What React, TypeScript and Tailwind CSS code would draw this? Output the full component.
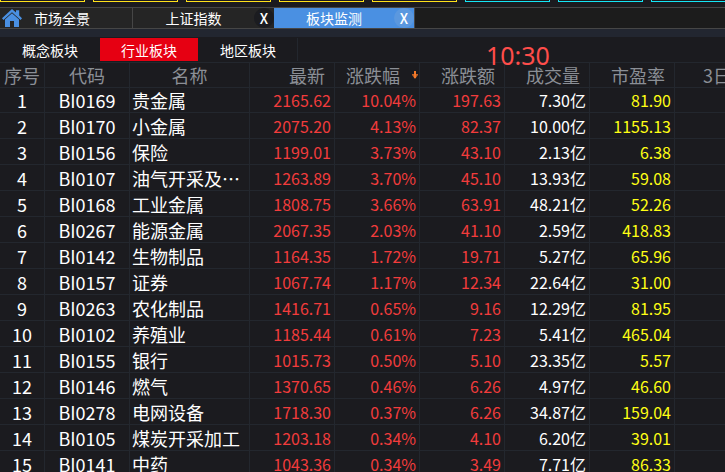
type Row = {
  code: string;
  name: string;
  last: string;
  pct: string;
  change: string;
  volume: string;
  pe: string;
};

const ROWS: Row[] = [
  { code: "BI0169", name: "贵金属", last: "2165.62", pct: "10.04%", change: "197.63", volume: "7.30亿", pe: "81.90" },
  { code: "BI0170", name: "小金属", last: "2075.20", pct: "4.13%", change: "82.37", volume: "10.00亿", pe: "1155.13" },
  { code: "BI0156", name: "保险", last: "1199.01", pct: "3.73%", change: "43.10", volume: "2.13亿", pe: "6.38" },
  { code: "BI0107", name: "油气开采及⋯", last: "1263.89", pct: "3.70%", change: "45.10", volume: "13.93亿", pe: "59.08" },
  { code: "BI0168", name: "工业金属", last: "1808.75", pct: "3.66%", change: "63.91", volume: "48.21亿", pe: "52.26" },
  { code: "BI0267", name: "能源金属", last: "2067.35", pct: "2.03%", change: "41.10", volume: "2.59亿", pe: "418.83" },
  { code: "BI0142", name: "生物制品", last: "1164.35", pct: "1.72%", change: "19.71", volume: "5.27亿", pe: "65.96" },
  { code: "BI0157", name: "证券", last: "1067.74", pct: "1.17%", change: "12.34", volume: "22.64亿", pe: "31.00" },
  { code: "BI0263", name: "农化制品", last: "1416.71", pct: "0.65%", change: "9.16", volume: "12.29亿", pe: "81.95" },
  { code: "BI0102", name: "养殖业", last: "1185.44", pct: "0.61%", change: "7.23", volume: "5.41亿", pe: "465.04" },
  { code: "BI0155", name: "银行", last: "1015.73", pct: "0.50%", change: "5.10", volume: "23.35亿", pe: "5.57" },
  { code: "BI0146", name: "燃气", last: "1370.65", pct: "0.46%", change: "6.26", volume: "4.97亿", pe: "46.60" },
  { code: "BI0278", name: "电网设备", last: "1718.30", pct: "0.37%", change: "6.26", volume: "34.87亿", pe: "159.04" },
  { code: "BI0105", name: "煤炭开采加工", last: "1203.18", pct: "0.34%", change: "4.10", volume: "6.20亿", pe: "39.01" },
  { code: "BI0141", name: "中药", last: "1043.36", pct: "0.34%", change: "3.49", volume: "7.71亿", pe: "86.33" },
];

const CARDS = ["yellow", "yellow", "yellow", "yellow", "yellow", "cyan", "cyan", "cyan"];

const HEAD = "border-r border-b border-[#23272e] p-0 font-normal";
const CELL = "border-r border-b border-[#23272e] p-0";
const NUM = `${CELL} pr-[3px] text-right text-base leading-5`;

function HomeIcon() {
  return (
    <svg width="20" height="18" viewBox="0 0 20 18" fill="#4a90e2" aria-hidden="true">
      <path d="M10 0 14 3.6V1.2h3.2v5.2L20 9.2l-1.4 1.7L10 3.2 1.4 10.9 0 9.2Z" />
      <path d="M10 4.2 17 10.5V18h-5v-6H8v6H3v-7.5Z" />
    </svg>
  );
}

function SortArrow() {
  return (
    <svg width="6" height="8" viewBox="0 0 6 8" fill="#f47a2a" aria-hidden="true">
      <path d="M2 0h2v7H2Z" />
      <path d="M0 3h6v1L3 8 0 4Z" opacity="0.75" />
    </svg>
  );
}

function CardStrip() {
  return (
    <div className="flex h-[7px] gap-2 overflow-hidden">
      {CARDS.map((tone, i) => (
        <div
          key={i}
          className={
            tone === "yellow"
              ? "h-[2px] w-[85px] shrink-0 border border-t-0 border-[#ffe11a]"
              : "h-[2px] w-[85px] shrink-0 border border-t-0 border-[#14e6f5]"
          }
        />
      ))}
    </div>
  );
}

function TopTabs() {
  return (
    <nav className="flex h-[22px] border-y border-[#464646] bg-[#1c1c1c] text-sm leading-5">
      <button className="flex w-[133px] items-center gap-3 border-r border-[#464646] bg-[#252525] pl-[2px]">
        <HomeIcon />
        市场全景
      </button>
      <div className="flex w-[141px] items-center bg-[#252525]">
        <button className="flex-1">上证指数</button>
        <button aria-label="关闭上证指数" className="size-5 rounded-full bg-[#1b1c20] font-medium">
          X
        </button>
      </div>
      <div className="flex w-[141px] items-center border-r border-[#464646] bg-[#4a90e2]">
        <button className="flex-1">板块监测</button>
        <button aria-label="关闭板块监测" className="size-5 rounded-full bg-[#5b98df] font-medium">
          X
        </button>
      </div>
    </nav>
  );
}

function SubTabs() {
  return (
    <div className="relative flex h-[25px] gap-px pl-px pt-px text-sm leading-5">
      <button className="h-[23px] w-[98px]">概念板块</button>
      <button className="h-[23px] w-[98px] bg-[#e60012]">行业板块</button>
      <button className="h-[23px] w-[99px] border-r border-[#23272e]">地区板块</button>
      <time className="absolute left-[486px] top-[2px] text-[25px] leading-8 text-[#ff4d4a] [font-family:'Noto_Sans','Noto_Sans_CJK_SC',sans-serif]">
        10:30
      </time>
    </div>
  );
}

function BoardTable() {
  return (
    <table className="w-[760px] table-fixed border-separate border-spacing-0 border-t border-[#23272e]">
      <colgroup>
        <col className="w-[45px]" />
        <col className="w-[85px]" />
        <col className="w-[120px]" />
        <col className="w-[85px]" />
        <col className="w-[85px]" />
        <col className="w-[85px]" />
        <col className="w-[85px]" />
        <col className="w-[85px]" />
        <col className="w-[85px]" />
      </colgroup>
      <thead>
        <tr className="h-[25px] text-lg leading-6 text-[#8b8f96]">
          <th className={HEAD}>序号</th>
          <th className={HEAD}>代码</th>
          <th className={HEAD}>名称</th>
          <th className={`${HEAD} pr-[9px] text-right`}>最新</th>
          <th className={HEAD}>
            <button className="flex w-full items-center justify-end gap-3 pr-px">
              涨跌幅
              <SortArrow />
            </button>
          </th>
          <th className={`${HEAD} pr-[9px] text-right`}>涨跌额</th>
          <th className={`${HEAD} pr-[9px] text-right`}>成交量</th>
          <th className={`${HEAD} pr-[9px] text-right`}>市盈率</th>
          <th className={`${HEAD} whitespace-nowrap pl-7 text-left`}>3日</th>
        </tr>
      </thead>
      <tbody>
        {ROWS.map((row, i) => (
          <tr key={row.code} className="h-[26px] text-lg leading-6 first:h-[25px]">
            <td className={`${CELL} text-center`}>{i + 1}</td>
            <td className={`${CELL} text-center`}>{row.code}</td>
            <td className={`${CELL} whitespace-nowrap pl-[2px]`}>{row.name}</td>
            <td className={`${NUM} text-[#f23c3c]`}>{row.last}</td>
            <td className={`${NUM} text-[#f23c3c]`}>{row.pct}</td>
            <td className={`${NUM} text-[#f23c3c]`}>{row.change}</td>
            <td className={NUM}>{row.volume}</td>
            <td className={`${NUM} text-[#ffff14]`}>{row.pe}</td>
            <td className={CELL} />
          </tr>
        ))}
      </tbody>
    </table>
  );
}

export default function App() {
  return (
    <main className="h-screen overflow-hidden bg-[#1b1b1f] text-white [font-family:'Noto_Sans_CJK_SC',sans-serif]">
      <CardStrip />
      <TopTabs />
      <div className="h-2 bg-[#222630]" />
      <SubTabs />
      <BoardTable />
    </main>
  );
}
